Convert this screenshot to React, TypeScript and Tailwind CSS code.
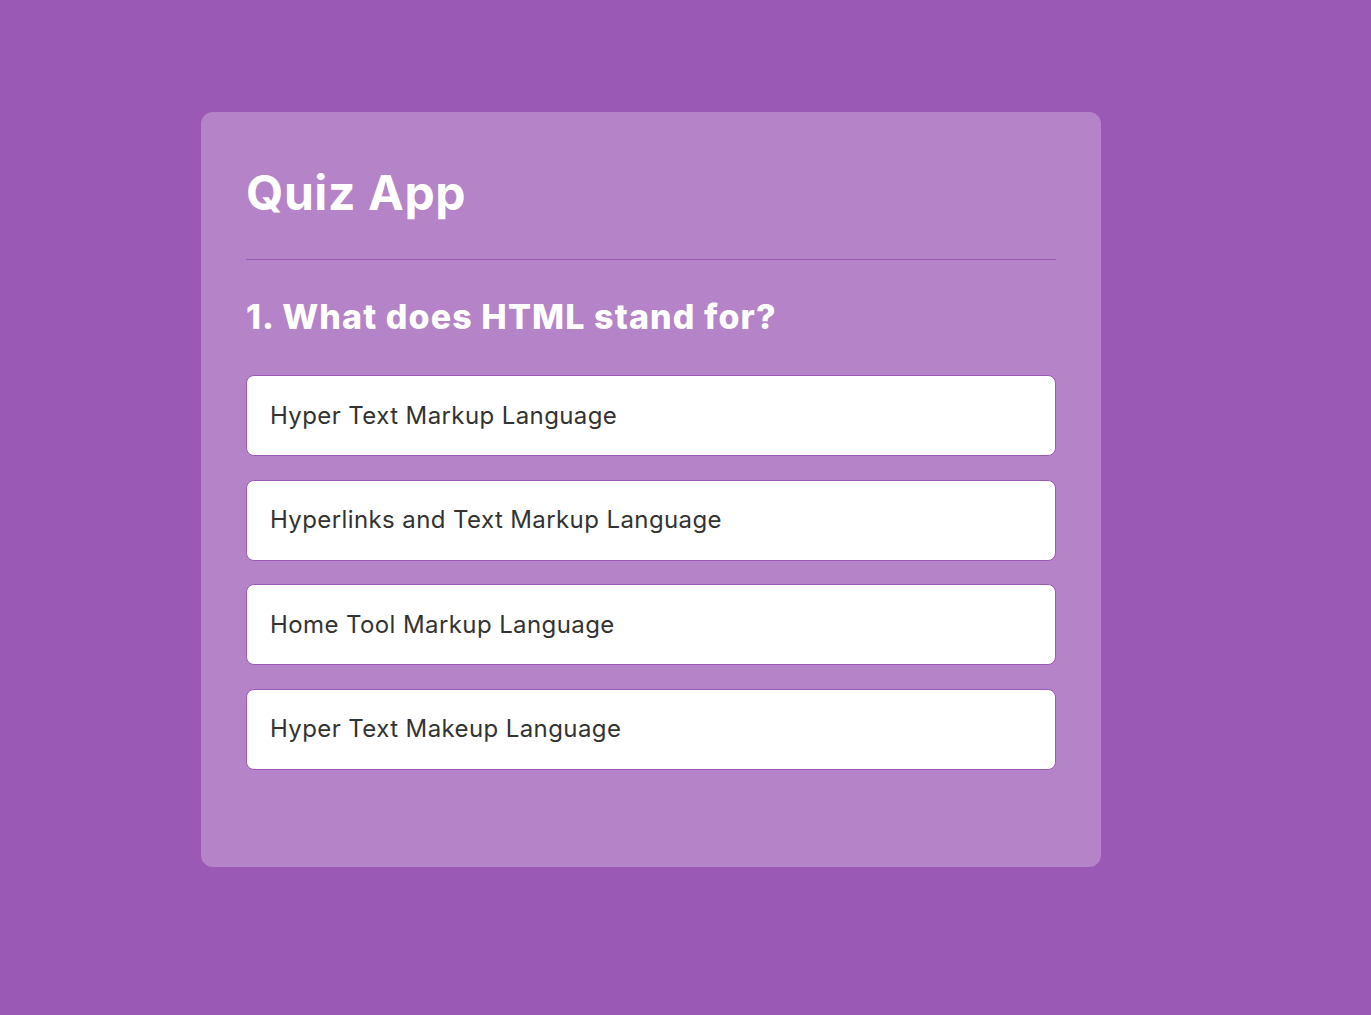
import React from "react";

const options = [
  "Hyper Text Markup Language",
  "Hyperlinks and Text Markup Language",
  "Home Tool Markup Language",
  "Hyper Text Makeup Language",
];

export default function App() {
  return (
    <div
      className="min-h-[1015px] w-full bg-[#9b59b6] pt-[112px]"
      style={{ fontFamily: "Inter, 'Noto Sans', sans-serif" }}
    >
      <div className="ml-[201px] w-[900px] h-[755px] rounded-[12px] bg-[#b583c8] px-[45px] pt-[50px]">
        <h1 className="text-[48px] leading-[62px] font-bold text-white tracking-[0.6px]">Quiz App</h1>
        <div className="mt-[35px] h-px bg-[#9b59b6]"></div>
        <h2 className="mt-[35px] text-[34px] leading-[44px] font-extrabold text-white tracking-[1.1px]">
          1. What does HTML stand for?
        </h2>
        <div className="mt-[36px] flex flex-col gap-[23.5px]">
          {options.map((o) => (
            <div
              key={o}
              className="h-[81px] flex items-center rounded-[8px] border border-[#9b59b6] bg-white pl-[23px] text-[24px] tracking-[0.4px] text-[#333]"
            >
              {o}
            </div>
          ))}
        </div>
      </div>
    </div>
  );
}
